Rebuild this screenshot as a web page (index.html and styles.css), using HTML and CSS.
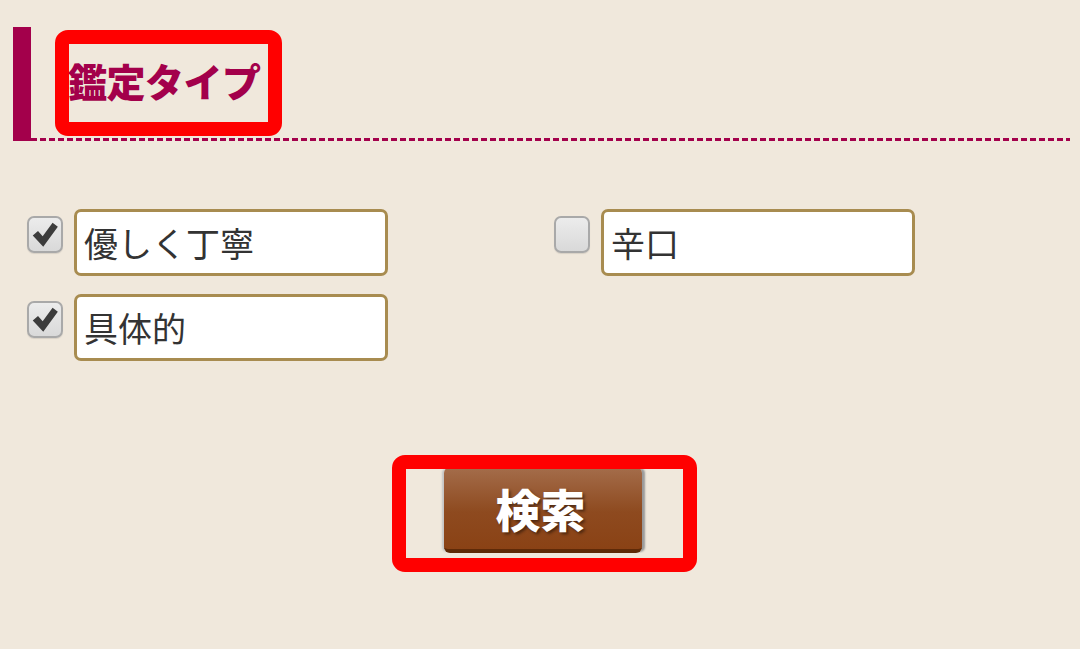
FILE: index.html
```html
<!DOCTYPE html>
<html lang="ja">
<head>
  <meta charset="UTF-8" />
  <meta name="viewport" content="width=device-width, initial-scale=1" />
  <title>鑑定タイプ</title>
  <link rel="stylesheet" href="styles.css">
</head>
<body>

<div class="page">
  <h2 class="section-title">鑑定タイプ</h2>

  <div class="options">
    <label class="option">
      <span class="check checked">
        <svg viewBox="0 0 24 24"><path d="M1.5 12.5 L6 8.5 L10 13 L18.5 1.5 L23 5 L10.5 22 Z"/></svg>
      </span>
      <span class="field">優しく丁寧</span>
    </label>
    <label class="option">
      <span class="check"></span>
      <span class="field">辛口</span>
    </label>
    <label class="option">
      <span class="check checked">
        <svg viewBox="0 0 24 24"><path d="M1.5 12.5 L6 8.5 L10 13 L18.5 1.5 L23 5 L10.5 22 Z"/></svg>
      </span>
      <span class="field">具体的</span>
    </label>
  </div>

  <div class="actions">
    <button class="search-btn">検索</button>
  </div>
</div>

<div class="mark mark-title"></div>
<div class="mark mark-button"></div>

</body>
</html>
```

FILE: styles.css
```css
html, body {
  margin: 0; padding: 0;
  background: #f0e8dc;
  font-family: "Noto Sans CJK JP", "Noto Sans", sans-serif;
  color: #333;
}

.page {
  padding: 27px 10px 0 13px;
}

.section-title {
  margin: 0;
  height: 114px;
  box-sizing: border-box;
  border-left: 18px solid #a3004b;
  padding: 0 0 8px 37px;
  display: flex;
  align-items: center;
  color: #a3004b;
  font-size: 39px;
  font-weight: 900;
  letter-spacing: -0.5px;
  background: repeating-linear-gradient(90deg, #a3004b 0 6px, transparent 6px 9px) left bottom / 100% 3px no-repeat;
}

.options {
  display: grid;
  grid-template-columns: 527px 1fr;
  row-gap: 18px;
  margin: 68px 0 0 14px;
}

.option {
  display: flex;
  align-items: flex-start;
  gap: 11px;
}

.check {
  margin-top: 7px;
  width: 36px;
  height: 37px;
  box-sizing: border-box;
  border: 2px solid #a9a9a9;
  border-radius: 7px;
  background: linear-gradient(#ececec, #d9d9d9);
  box-shadow: 0 1px 1px rgba(0,0,0,0.1);
  display: flex;
  align-items: center;
  justify-content: center;
}

.check svg {
  width: 28px;
  height: 28px;
  fill: #3c3c3c;
}

.field {
  width: 314px;
  height: 67px;
  box-sizing: border-box;
  border: 3px solid #a88c50;
  border-radius: 7px;
  background: #fff;
  padding-left: 7px;
  display: flex;
  align-items: center;
  font-size: 34px;
  color: #333;
}

.actions {
  display: flex;
  justify-content: center;
  margin-top: 106px;
  padding-left: 3px;
}

.search-btn {
  width: 198px;
  height: 86px;
  border: none;
  border-bottom: 4px solid #5e2a08;
  border-radius: 6px;
  background: linear-gradient(#a46d4b, #8e4a1f 55%, #8a4215);
  box-shadow: 4px 0 2px -1px #999, -3px 0 2px -1px #c4c4c4;
  color: #fff;
  font-family: "Noto Sans CJK JP", sans-serif;
  font-size: 45px;
  font-weight: 900;
  text-shadow: 2px 2px 3px rgba(0,0,0,0.45);
  padding: 0 5px 0 0;
}

.mark {
  position: absolute;
  border: 14px solid #ff0000;
  border-radius: 13px;
  box-sizing: border-box;
}

.mark-title {
  left: 55px; top: 30px;
  width: 227px; height: 106px;
}

.mark-button {
  left: 392px; top: 455px;
  width: 305px; height: 117px;
}
```
